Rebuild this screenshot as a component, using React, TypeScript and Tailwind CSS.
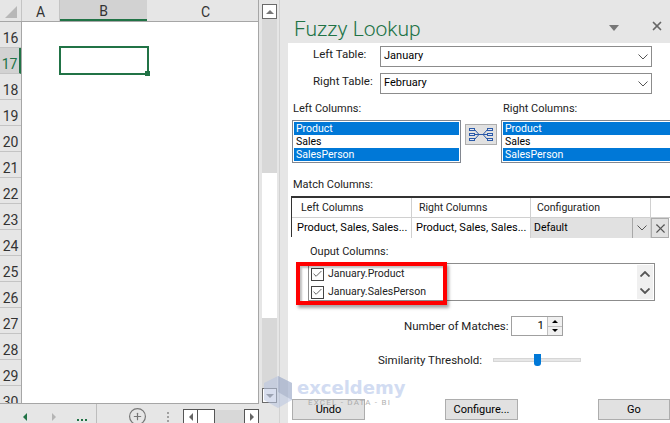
import { Check, CirclePlus, X } from "lucide-react";

const rows = [16, 17, 18, 19, 20, 21, 22, 23, 24, 25, 26, 27, 28, 29, 30];

function Chevron({ className, bold }: { className?: string; bold?: boolean }) {
  return (
    <svg width="10" height="6" viewBox="0 0 10 6" fill="none" stroke="#555" strokeWidth={bold ? 1.8 : 1} className={className}>
      <path d="M0.5 0.5 L5 5 L9.5 0.5" />
    </svg>
  );
}

function Dropdown({ value }: { value: string }) {
  return (
    <div className="flex h-[21px] w-[272px] items-center justify-between border border-[#8c8c8c] bg-white pr-[3px] pl-[3px] text-[11px] text-black">
      <span>{value}</span>
      <Chevron />
    </div>
  );
}

function ListBox({ className }: { className: string }) {
  return (
    <div className={`h-[43px] border border-[#828790] bg-white p-px text-[10.5px] text-black ${className}`}>
      <div className="h-[13px] bg-[#0078d7] pt-px pl-[2px] leading-[12px] text-white">Product</div>
      <div className="h-[13px] pt-px pl-[2px] leading-[12px]">Sales</div>
      <div className="h-[13px] bg-[#0078d7] pt-px pl-[2px] leading-[12px] text-white">SalesPerson</div>
    </div>
  );
}

function OutputRow({ label }: { label: string }) {
  return (
    <div className="flex h-[18px] items-center gap-[4px] pl-[2px] text-[10.5px]">
      <div className="flex h-[13px] w-[13px] shrink-0 items-center justify-center border border-[#444] bg-white">
        <Check size={12} strokeWidth={2} className="text-[#555]" />
      </div>
      <span>{label}</span>
    </div>
  );
}

function PaneButton({ label, className }: { label: string; className: string }) {
  return (
    <div className={`flex h-[21px] items-center justify-center border border-[#adadad] bg-[#e1e1e1] pt-[2px] text-[11px] text-black ${className}`}>
      {label}
    </div>
  );
}

export default function App() {
  return (
    <div className="relative flex h-[423px] w-[670px] overflow-hidden bg-[#e6e6e6] font-['Roboto','Liberation_Sans',sans-serif] text-[#222]">
      {/* sheet */}
      <div className="flex w-[280px] shrink-0 flex-col border-r border-[#d2d2d2]">
        <div className="flex min-h-0 flex-1">
          <div className="flex w-[259px] shrink-0 flex-col overflow-hidden border-r border-[#a6a6a6]">
            <div className="flex h-[21px] shrink-0 text-[14px] text-[#333]">
              <div className="relative w-[22px] border-r border-[#c4c4c4]">
                <div className="absolute right-[4px] bottom-[3px] h-0 w-0 border-b-[12px] border-l-[12px] border-b-[#b8b8b8] border-l-transparent" />
              </div>
              <div className="flex w-[38px] items-center justify-center border-r border-[#c4c4c4] pt-[3px]">A</div>
              <div className="flex w-[87px] items-center justify-center border-b-2 border-[#217346] bg-[#d2d2d2] pt-[3px]">B</div>
              <div className="flex flex-1 items-center justify-center pt-[3px] pl-[6px]">C</div>
            </div>
            <div className="relative flex min-h-0 flex-1 border-t border-[#a6a6a6]">
              <div className="w-[22px] shrink-0 border-r border-[#a6a6a6]">
                {rows.map((r) => (
                  <div
                    key={r}
                    className={`flex h-[26px] items-center justify-center border-b border-[#c4c4c4] pt-[8px] text-[14px] ${
                      r === 17 ? "border-r-2 border-r-[#217346] bg-[#d2d2d2] text-[#217346]" : "text-[#333]"
                    }`}
                  >
                    {r}
                  </div>
                ))}
              </div>
              <div className="flex-1 bg-white" />
              <div className="absolute top-[24px] left-[59px] h-[29px] w-[90px] border-2 border-[#217346]">
                <div className="absolute -right-[3px] -bottom-[3px] h-[5px] w-[5px] bg-[#217346]" />
              </div>
            </div>
          </div>
          <div className="flex w-[20px] shrink-0 flex-col pl-[3px]">
            <div className="mt-[4px] flex h-[15px] w-[15px] items-center justify-center border border-[#6a6a6a] bg-white">
              <div className="h-0 w-0 border-x-[4px] border-b-[4px] border-x-transparent border-b-[#777]" />
            </div>
            <div className="flex w-[15px] flex-1 flex-col bg-[#d8d8d8]">
              <div className="mt-[154px] h-[145px] bg-white" />
            </div>
            <div className="flex h-[15px] w-[15px] items-center justify-center border border-[#6a6a6a] bg-white">
              <div className="h-0 w-0 border-x-[4px] border-t-[4px] border-x-transparent border-t-[#777]" />
            </div>
          </div>
        </div>
        {/* sheet tabs */}
        <div className="flex h-[20px] w-[259px] shrink-0 overflow-hidden border-t border-[#a6a6a6]">
          <div className="flex h-full w-[97px] shrink-0 items-center border-r border-[#bdbdbd] pt-[6px] pl-[23px]">
            <div className="h-0 w-0 border-y-[4px] border-r-[4px] border-y-transparent border-r-[#217346]" />
            <div className="ml-[25px] h-0 w-0 border-y-[4px] border-l-[4px] border-y-transparent border-l-[#b5b5b5]" />
            <div className="mt-[6px] ml-[21px] flex gap-[2px]">
              <span className="h-[2px] w-[2px] bg-[#217346]" />
              <span className="h-[2px] w-[2px] bg-[#217346]" />
              <span className="h-[2px] w-[2px] bg-[#217346]" />
            </div>
          </div>
          <div className="flex h-full flex-1 items-center pt-[6px]">
            <CirclePlus size={19} strokeWidth={1.5} className="ml-[31px] shrink-0 text-[#777]" />
            <div className="ml-[20px] flex flex-col gap-[2px]">
              <span className="h-[2px] w-[2px] bg-[#a0a0a0]" />
              <span className="h-[2px] w-[2px] bg-[#a0a0a0]" />
              <span className="h-[2px] w-[2px] bg-[#a0a0a0]" />
            </div>
            <div className="ml-[14px] flex h-[15px] w-[15px] shrink-0 items-center justify-center border border-[#555] bg-white">
              <div className="h-0 w-0 border-y-[4px] border-r-[4px] border-y-transparent border-r-[#666]" />
            </div>
            <div className="h-[15px] w-[17px] shrink-0 border-y border-r border-[#555] bg-white" />
            <div className="h-[13px] w-[29px] shrink-0 bg-[#d8d8d8]" />
            <div className="flex h-[15px] w-[15px] shrink-0 items-center justify-center border border-[#555] bg-white">
              <div className="h-0 w-0 border-y-[4px] border-l-[4px] border-y-transparent border-l-[#666]" />
            </div>
          </div>
        </div>
      </div>

      {/* task pane */}
      <div className="flex min-w-0 flex-1 flex-col pl-[8px]">
        <div className="flex h-[43px] shrink-0 items-end justify-between pr-[6px] pb-[2px]">
          <span className="pl-[6px] text-[21px] leading-[24px] font-light text-[#217346]">Fuzzy Lookup</span>
          <div className="mb-[8px] flex items-center gap-[31px]">
            <div className="mt-[3px] h-0 w-0 border-x-[5px] border-t-[6px] border-x-transparent border-t-[#777]" />
            <X size={14} strokeWidth={3} className="text-[#666]" />
          </div>
        </div>
        <div className="flex min-h-0 flex-1 flex-col overflow-hidden bg-white pl-[3px] text-[11.5px] text-[#222]">
          <div className="mt-[3px] flex h-[21px] items-start">
            <span className="ml-[22px] w-[67px] leading-[16px]">Left Table:</span>
            <Dropdown value="January" />
          </div>
          <div className="mt-[6px] flex h-[21px] items-start">
            <span className="ml-[22px] w-[67px] leading-[16px]">Right Table:</span>
            <Dropdown value="February" />
          </div>
          <div className="mt-[7px] flex h-[16px] items-center pl-[2px] text-[11px]">
            <span className="w-[210px]">Left Columns:</span>
            <span>Right Columns:</span>
          </div>
          <div className="mt-[3px] flex items-start pl-px">
            <ListBox className="w-[169px] shrink-0" />
            <div className="mx-[4px] mt-[4px] flex h-[21px] w-[32px] shrink-0 items-center justify-center border border-[#adadad] bg-[#e1e1e1]">
              <svg width="28" height="17" viewBox="0 0 28 17" fill="none" stroke="#2b5aa8" strokeWidth="1">
                <rect x="2.5" y="2.5" width="5" height="2" fill="#dfe6f5" />
                <rect x="2.5" y="12.5" width="5" height="2" fill="#dfe6f5" />
                <rect x="20.5" y="2.5" width="5" height="2" fill="#dfe6f5" />
                <rect x="20.5" y="12.5" width="5" height="2" fill="#dfe6f5" />
                <rect x="2.5" y="7.5" width="5" height="2" fill="#dfe6f5" />
                <rect x="20.5" y="7.5" width="5" height="2" fill="#dfe6f5" />
                <path d="M7.5 3.5 L12 8.5 H16 L20.5 3.5 M7.5 8.5 H20.5 M7.5 13.5 L12 8.5 M16 8.5 L20.5 13.5" />
              </svg>
            </div>
            <ListBox className="w-[175px] shrink-0 border-r-0" />
          </div>
          <div className="mt-[14px] flex h-[16px] items-center pl-[2px] text-[11px]">Match Columns:</div>
          <div className="mt-[3px] h-[41px] shrink-0 border-t-2 border-l border-t-[#333] border-l-[#333]">
            <div className="flex h-[20px] items-center border-b border-[#d0d0d0] text-[10.5px]">
              <span className="w-[120px] border-r border-[#d0d0d0] pl-[9px] leading-[20px]">Left Columns</span>
              <span className="w-[119px] border-r border-[#d0d0d0] pl-[7px] leading-[20px]">Right Columns</span>
              <span className="w-[120px] border-r border-[#d0d0d0] pl-[6px] leading-[20px]">Configuration</span>
            </div>
            <div className="flex h-[20px] items-center text-[11px] text-black">
              <span className="w-[120px] border-r border-[#d0d0d0] pl-[5px] leading-[20px] whitespace-nowrap">Product, Sales, Sales...</span>
              <span className="w-[119px] border-r border-[#d0d0d0] pl-[4px] leading-[20px] whitespace-nowrap">Product, Sales, Sales...</span>
              <div className="flex h-[20px] w-[120px] items-center border-r border-[#d0d0d0] bg-[#e1e1e1] pl-[3px] text-[10.5px]">
                <span className="w-[98px]">Default</span>
                <div className="flex h-full flex-1 items-center justify-center border-l border-[#a8a8a8]">
                  <Chevron />
                </div>
              </div>
              <div className="flex h-[20px] w-[18px] shrink-0 items-center justify-center border border-[#adadad] bg-[#e1e1e1]">
                <X size={15} strokeWidth={1.8} className="text-[#555]" />
              </div>
            </div>
          </div>
          <div className="mt-[7px] flex h-[16px] items-center pl-[19px] text-[11px]">Ouput Columns:</div>
          <div className="relative mt-[3px] ml-[17px] flex h-[38px] w-[347px] shrink-0 justify-between border border-[#8c8c8c] bg-white">
            <div className="pt-[1px] text-[#222]">
              <OutputRow label="January.Product" />
              <OutputRow label="January.SalesPerson" />
            </div>
            <div className="m-px flex w-[16px] flex-col items-center justify-around bg-[#f0f0f0]">
              <Chevron bold className="rotate-180" />
              <Chevron bold />
            </div>
            <div className="absolute top-[-2px] left-[-13px] h-[43px] w-[151px] border-[4px] border-[#ff0000] shadow-[2px_3px_3px_rgba(0,0,0,0.35),inset_2px_2px_2px_rgba(0,0,0,0.25)]" />
          </div>
          <div className="mt-[15px] flex h-[20px] items-center pl-[113px]">
            <span className="w-[107px] shrink-0 pt-px whitespace-nowrap">Number of Matches:</span>
            <div className="flex h-[20px] w-[52px] items-center justify-end border border-[#a0a0a0] bg-white">
              <span className="mr-[3px] text-black">1</span>
              <div className="flex h-full w-[15px] flex-col">
                <div className="flex flex-1 items-center justify-center border-b border-l border-[#c0c0c0] bg-[#f0f0f0]">
                  <div className="h-0 w-0 border-x-[3px] border-b-[3px] border-x-transparent border-b-black" />
                </div>
                <div className="flex flex-1 items-center justify-center border-l border-[#c0c0c0] bg-[#f0f0f0]">
                  <div className="h-0 w-0 border-x-[3px] border-t-[3px] border-x-transparent border-t-black" />
                </div>
              </div>
            </div>
          </div>
          <div className="mt-[14px] flex h-[20px] items-center pl-[87px]">
            <span className="w-[115px] shrink-0 pt-px whitespace-nowrap">Similarity Threshold:</span>
            <div className="relative h-[4px] w-[88px] border border-[#d6d6d6] bg-[#e7e7e7]">
              <div className="absolute top-[-5px] left-[40px] h-[12px] w-[7px] rounded-b-[3px] bg-[#0078d7]" />
            </div>
          </div>
          <div className="mt-[29px] flex items-center justify-between pl-px">
            <PaneButton label="Undo" className="w-[73px]" />
            <PaneButton label="Configure..." className="w-[73px]" />
            <PaneButton label="Go" className="w-[72px]" />
          </div>
        </div>
      </div>

      {/* watermark */}
      <div className="pointer-events-none absolute top-[376px] left-[264px] flex items-start opacity-75">
        <svg width="28" height="32" viewBox="0 0 28 32" className="mr-[5px]">
          <path d="M14 0 L28 7 V24 L14 32 L0 24 V7 Z" fill="#b9c6e2" opacity="0.75" />
          <path d="M14 0 L28 7 V24 L14 16 Z" fill="#8f9fbc" opacity="0.6" />
        </svg>
        <div className="flex flex-col">
          <span className="pt-px font-['DejaVu_Sans',sans-serif] text-[18px] leading-[22px] font-bold text-[#c3d1ee]">exceldemy</span>
          <span className="mt-[-1px] pl-[11px] text-[8px] leading-[10px] tracking-[1.2px] whitespace-nowrap text-[#999]">EXCEL - DATA - BI</span>
        </div>
      </div>
    </div>
  );
}
